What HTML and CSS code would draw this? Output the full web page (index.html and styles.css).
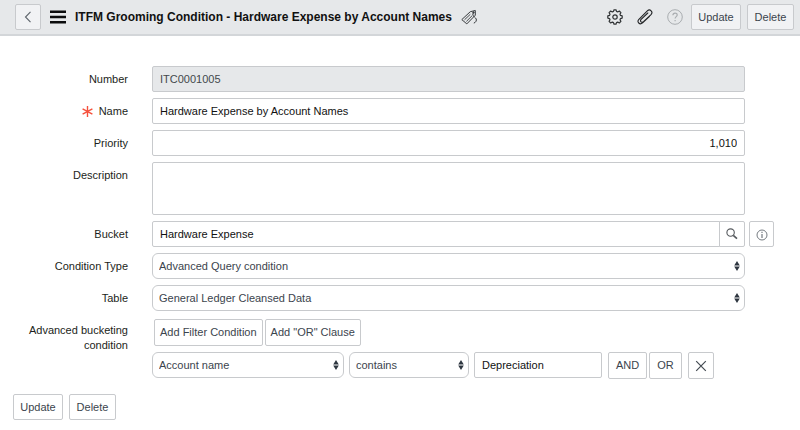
FILE: index.html
```html
<!DOCTYPE html>
<html lang="en">
<head>
<meta charset="utf-8">
<meta name="viewport" content="width=device-width, initial-scale=1">
<title>ITFM Grooming Condition</title>
<link rel="stylesheet" href="styles.css">
</head>
<body>
<header class="bar">
  <button class="btn btn-square" type="button" aria-label="Back">
    <svg width="8" height="12" viewBox="0 0 8 12"><path d="M6.500 .8 1.500 6l5 5.200" fill="none" stroke="#5d646b" stroke-width="1.100"/></svg>
  </button>
  <button class="icon menu" type="button" aria-label="Menu">
    <svg width="16" height="14" viewBox="0 0 16 14"><path d="M0 1.800h16M0 7h16M0 12.200h16" stroke="#0b0c0d" stroke-width="2.600"/></svg>
  </button>
  <h1 class="title">ITFM Grooming Condition - Hardware Expense by Account Names</h1>
  <button class="icon" type="button" aria-label="Tags">
    <svg width="17" height="17" viewBox="0 0 17 17" fill="none" stroke="#36393c" stroke-width="1"><path d="M.8 10.600 9.300 2.700 14.300 1.500v4.700L5.800 14.900z" stroke-linejoin="round"/><path d="M3.500 10.800l5.800-5.500M5.400 12.400l5.600-5.600" stroke-width=".9"/><path d="M12.600 3.300c-1.600 2.200-.5 3.600.8 4.700 1.600 1.300 2.600 2.400 1.600 4.300-.5 1-1.300 1.500-2.200 1.800"/><circle cx="12.500" cy="3.500" r=".7" fill="#36393c"/></svg>
  </button>
  <div class="actions">
    <button class="icon" type="button" aria-label="Settings">
      <svg width="16" height="16" viewBox="0 0 16 16" fill="none" stroke="#303335" stroke-width="1.200" stroke-linejoin="round"><path d="M6.500 2.400 7 .8h2l.5 1.600 1.200.5 1.600-.9 1.600 1.600-.9 1.600.5 1.200 1.700.5v2.200l-1.700.5-.5 1.200.9 1.600-1.600 1.600-1.600-.9-1.200.5L9 15.200H7l-.5-1.600-1.200-.5-1.600.9-1.600-1.600.9-1.600-.5-1.200L.8 9.100V6.900l1.700-.5.5-1.200-.9-1.600L3.700 2l1.600.9z"/><circle cx="8" cy="8" r="2.200"/></svg>
    </button>
    <button class="icon" type="button" aria-label="Attachments">
      <svg width="16" height="16" viewBox="0 0 16 16" fill="none" stroke="#222426" stroke-width="1.100" stroke-linecap="round"><path d="M12.300 7.700 5.600 13.900C2.700 16.300-.5 13 1.900 10.300L10.300 1.900c2.700-2.500 6.200 1 3.700 3.700L6.500 12.700c-1.800 1.600-3.900-.5-2.400-2.300L10.800 4"/></svg>
    </button>
    <button class="icon" type="button" aria-label="Help">
      <svg width="16" height="16" viewBox="0 0 16 16" fill="none" stroke="#a9adb0" stroke-width="1"><circle cx="8" cy="8" r="7.300"/><path d="M5.900 6.200c.1-2.700 4.300-2.700 4.300-.2 0 1.700-2.100 1.600-2.100 3.600M8.100 11v1.300" stroke-width="1.200"/></svg>
    </button>
    <div class="pair">
      <button class="btn" type="button">Update</button>
      <button class="btn btn-narrow" type="button">Delete</button>
    </div>
  </div>
</header>

<form class="form">
  <div class="row">
    <label class="label" for="number">Number</label>
    <div class="field"><input class="input" id="number" value="ITC0001005" readonly></div>
  </div>
  <div class="row">
    <label class="label" for="name"><svg class="required" width="11" height="11" viewBox="0 0 11 11"><path d="M5.500 0v11M.6 2.800l9.800 5.400M.6 8.200l9.800-5.400" stroke="#f5503c" stroke-width="1.400"/></svg>Name</label>
    <div class="field"><input class="input" id="name" value="Hardware Expense by Account Names" required></div>
  </div>
  <div class="row">
    <label class="label" for="priority">Priority</label>
    <div class="field"><input class="input number" id="priority" value="1,010"></div>
  </div>
  <div class="row">
    <label class="label" for="description">Description</label>
    <div class="field"><textarea class="input area" id="description"></textarea></div>
  </div>
  <div class="row">
    <label class="label" for="bucket">Bucket</label>
    <div class="field lookup">
      <input class="input" id="bucket" value="Hardware Expense">
      <button class="btn find" type="button" aria-label="Look up bucket">
        <svg width="12" height="12" viewBox="0 0 12 12" fill="none" stroke="#55595d"><circle cx="4.600" cy="4.600" r="3.700" stroke-width="1.100"/><path d="M7.300 7.300l3.700 3.400" stroke-width="1.600"/></svg>
      </button>
    </div>
    <button class="btn info" type="button" aria-label="Preview record">
      <svg width="12" height="12" viewBox="0 0 12 12" fill="none" stroke="#757b81"><circle cx="6" cy="6" r="5"/><path d="M6 5v4M6 2.800V4" stroke-width="1.200"/></svg>
    </button>
  </div>
  <div class="row">
    <label class="label" for="type">Condition Type</label>
    <div class="field"><select class="input select" id="type"><option>Advanced Query condition</option></select></div>
  </div>
  <div class="row">
    <label class="label" for="table">Table</label>
    <div class="field"><select class="input select" id="table"><option>General Ledger Cleansed Data</option></select></div>
  </div>
  <div class="row">
    <label class="label" for="column">Advanced bucketing condition</label>
    <div class="field builder">
      <div class="clauses">
        <button class="btn" type="button">Add Filter Condition</button>
        <button class="btn" type="button">Add "OR" Clause</button>
      </div>
      <div class="condition">
        <select class="input select column" id="column"><option>Account name</option></select>
        <select class="input select operator" aria-label="Operator"><option>contains</option></select>
        <input class="input value" aria-label="Value" value="Depreciation">
        <div class="joins">
          <button class="btn" type="button">AND</button>
          <button class="btn" type="button">OR</button>
        </div>
        <button class="btn btn-square" type="button" aria-label="Remove condition">
          <svg width="12" height="12" viewBox="0 0 12 12"><path d="M1.200 1.200l9.600 9.600M10.800 1.200 1.200 10.800" stroke="#444b52" stroke-width="1.200"/></svg>
        </button>
      </div>
    </div>
  </div>
</form>

<footer class="pair footer">
  <button class="btn" type="button">Update</button>
  <button class="btn btn-narrow" type="button">Delete</button>
</footer>
</body>
</html>
```

FILE: styles.css
```css
* {
  box-sizing: border-box;
}

body {
  margin: 0;
  background: #fff;
  color: #1c1e20;
  font: 11px/15px "Liberation Sans", Arial, sans-serif;
}

button,
input,
select,
textarea {
  margin: 0;
  font: inherit;
}

svg {
  display: block;
}

.bar {
  display: flex;
  align-items: center;
  padding: 4px 6px 4px 15px;
  background: #e6e8ea;
  border-bottom: 2px solid #d3d6d9;
}

.title {
  margin: 0 9px 0 9px;
  color: #111;
  font-size: 12px;
  white-space: nowrap;
}

.icon {
  padding: 0;
  border: 0;
  background: none;
}

.menu {
  margin-left: 9px;
}

.actions {
  display: flex;
  align-items: center;
  gap: 14px;
  margin-left: auto;
}

.pair {
  display: flex;
  gap: 6px;
}

.actions .pair {
  margin-left: -6px;
}

.btn {
  display: flex;
  align-items: center;
  justify-content: center;
  flex: none;
  height: 26px;
  padding: 0 7px;
  border: 1px solid #c8cacd;
  border-radius: 2px;
  background: #fff;
  color: #3b444d;
  white-space: nowrap;
}

.pair .btn {
  width: 50px;
}

.pair .btn-narrow {
  width: 47px;
}

.bar .btn {
  background: #f1f2f4;
}

.btn-square {
  width: 26px;
  padding: 0;
}

.form {
  display: flex;
  flex-direction: column;
  gap: 6px;
  padding: 30px 26px 15px 18px;
}

.row {
  display: grid;
  grid-template-columns: 110px 1fr 25px;
}

.label {
  display: flex;
  justify-content: flex-end;
  padding-top: 6px;
  text-align: right;
}

.required {
  margin: 2px 6px 0 0;
}

.field {
  min-width: 0;
  margin: 0 4px 0 24px;
}

.input {
  display: block;
  width: 100%;
  height: 26px;
  padding: 0 7px;
  border: 1px solid #c8cacd;
  border-radius: 2px;
  background: #fff;
  color: #111;
}

.input:read-only:not(select) {
  background: #e6e8ea;
  color: #44484c;
}

.number {
  text-align: right;
}

.area {
  height: 53px;
  resize: none;
}

.lookup {
  display: flex;
}

.lookup .input {
  flex: 1;
  border-radius: 2px 0 0 2px;
}

.find {
  width: 26px;
  margin-left: -1px;
  padding: 0;
  border-radius: 0 2px 2px 0;
}

.info {
  padding: 2px 0 0;
}

.select {
  appearance: none;
  padding: 0 20px 0 6px;
  border-radius: 6px;
  background: #fff url("data:image/svg+xml,%3Csvg xmlns='http://www.w3.org/2000/svg' width='6' height='10'%3E%3Cpath d='M3 0l2.800 4.500H.2zM3 10l2.800-4.500H.2z' fill='%232e3640'/%3E%3C/svg%3E") no-repeat right 4px center;
  color: #3b444d;
}

.builder {
  display: flex;
  flex-direction: column;
  gap: 6px;
  padding-top: 2px;
}

.builder .btn {
  height: 27px;
}

.clauses {
  display: flex;
  gap: 2px;
  padding-left: 2px;
}

.clauses .btn {
  padding: 0 5px;
}

.condition {
  display: flex;
  gap: 5px;
}

.condition .column {
  width: 192px;
}

.condition .operator {
  width: 120px;
}

.condition .value {
  width: 128px;
}

.joins {
  display: flex;
  gap: 2px;
  padding: 0 1px;
}

.footer {
  padding: 0 13px 10px;
}
```
